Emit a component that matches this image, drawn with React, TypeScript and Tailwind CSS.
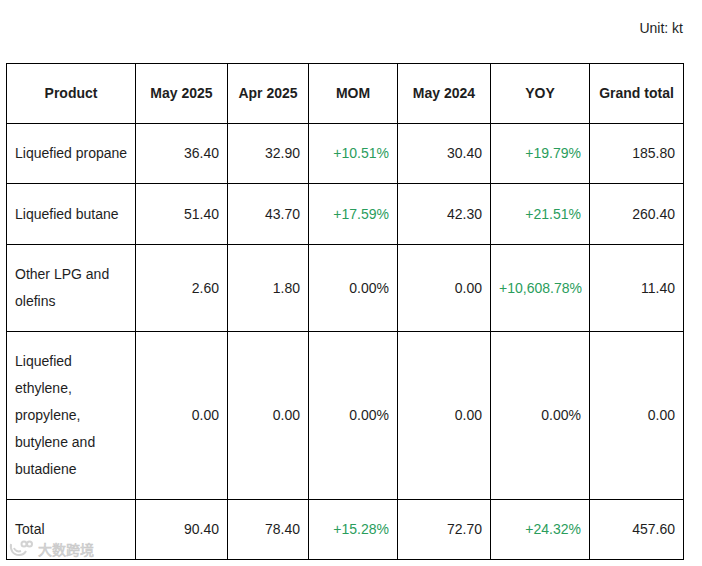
import React from "react";

type Row = {
  name: React.ReactNode;
  may25: string;
  apr25: string;
  mom: string;
  momGreen: boolean;
  may24: string;
  yoy: string;
  yoyGreen: boolean;
  total: string;
  h: string;
};

const rows: Row[] = [
  { name: "Liquefied propane", may25: "36.40", apr25: "32.90", mom: "+10.51%", momGreen: true, may24: "30.40", yoy: "+19.79%", yoyGreen: true, total: "185.80", h: "h-[60px]" },
  { name: "Liquefied butane", may25: "51.40", apr25: "43.70", mom: "+17.59%", momGreen: true, may24: "42.30", yoy: "+21.51%", yoyGreen: true, total: "260.40", h: "h-[61px]" },
  { name: (<>Other LPG and<br />olefins</>), may25: "2.60", apr25: "1.80", mom: "0.00%", momGreen: false, may24: "0.00", yoy: "+10,608.78%", yoyGreen: true, total: "11.40", h: "h-[87px]" },
  { name: (<>Liquefied<br />ethylene,<br />propylene,<br />butylene and<br />butadiene</>), may25: "0.00", apr25: "0.00", mom: "0.00%", momGreen: false, may24: "0.00", yoy: "0.00%", yoyGreen: false, total: "0.00", h: "h-[168px]" },
  { name: "Total", may25: "90.40", apr25: "78.40", mom: "+15.28%", momGreen: true, may24: "72.70", yoy: "+24.32%", yoyGreen: true, total: "457.60", h: "h-[60px]" },
];

const headers = ["Product", "May 2025", "Apr 2025", "MOM", "May 2024", "YOY", "Grand total"];
const widths = ["w-[129px]", "w-[92px]", "w-[81px]", "w-[89px]", "w-[93px]", "w-[99px]", "w-[94px]"];

const cell = "border border-black px-[8px] align-middle text-[14px] leading-[27px]";

export default function App() {
  return (
    <div
      className="min-h-[566px] w-[702px] bg-white text-[#1e1e1e]"
      style={{ fontFamily: '"Liberation Sans", Arial, sans-serif' }}
    >
      <div className="relative ml-[6px] w-[677px] pt-[19px]">
        <div className="text-right text-[14px] leading-[18px]">Unit: kt</div>
        <table className="mt-[26px] w-[677px] table-fixed border-collapse">
          <colgroup>
            {widths.map((w, i) => (
              <col key={i} className={w} />
            ))}
          </colgroup>
          <thead>
            <tr className="h-[60px]">
              {headers.map((h) => (
                <th key={h} className={`${cell} text-center font-bold`}>
                  {h}
                </th>
              ))}
            </tr>
          </thead>
          <tbody>
            {rows.map((r, i) => (
              <tr key={i} className={r.h}>
                <td className={`${cell} whitespace-nowrap pr-[2px] text-left`}>{r.name}</td>
                <td className={`${cell} text-right`}>{r.may25}</td>
                <td className={`${cell} text-right`}>{r.apr25}</td>
                <td className={`${cell} text-right ${r.momGreen ? "text-[#2a9d5c]" : ""}`}>{r.mom}</td>
                <td className={`${cell} text-right`}>{r.may24}</td>
                <td className={`${cell} text-right ${r.yoyGreen ? "text-[#2a9d5c]" : ""}`}>{r.yoy}</td>
                <td className={`${cell} text-right`}>{r.total}</td>
              </tr>
            ))}
          </tbody>
        </table>
        <div className="pointer-events-none absolute left-[2px] top-[540px] flex items-center gap-[4px] opacity-90">
          <svg width="26" height="18" viewBox="0 0 26 18" fill="none" stroke="#cfcfcf" strokeWidth="2">
            <path d="M3 4 C2 10 5 15 11 15 C15 15 17 13 18 11" />
            <path d="M6 8 C7 11 10 12 13 11" />
            <circle cx="16" cy="4" r="2.5" />
            <circle cx="21.5" cy="4" r="2.5" />
          </svg>
          <span
            className="text-[14px] leading-[18px] text-[#d4d4d4]"
            style={{ fontFamily: '"Noto Sans CJK SC", sans-serif', WebkitTextStroke: "0.6px #c4c4c4" }}
          >
            大数跨境
          </span>
        </div>
      </div>
    </div>
  );
}
